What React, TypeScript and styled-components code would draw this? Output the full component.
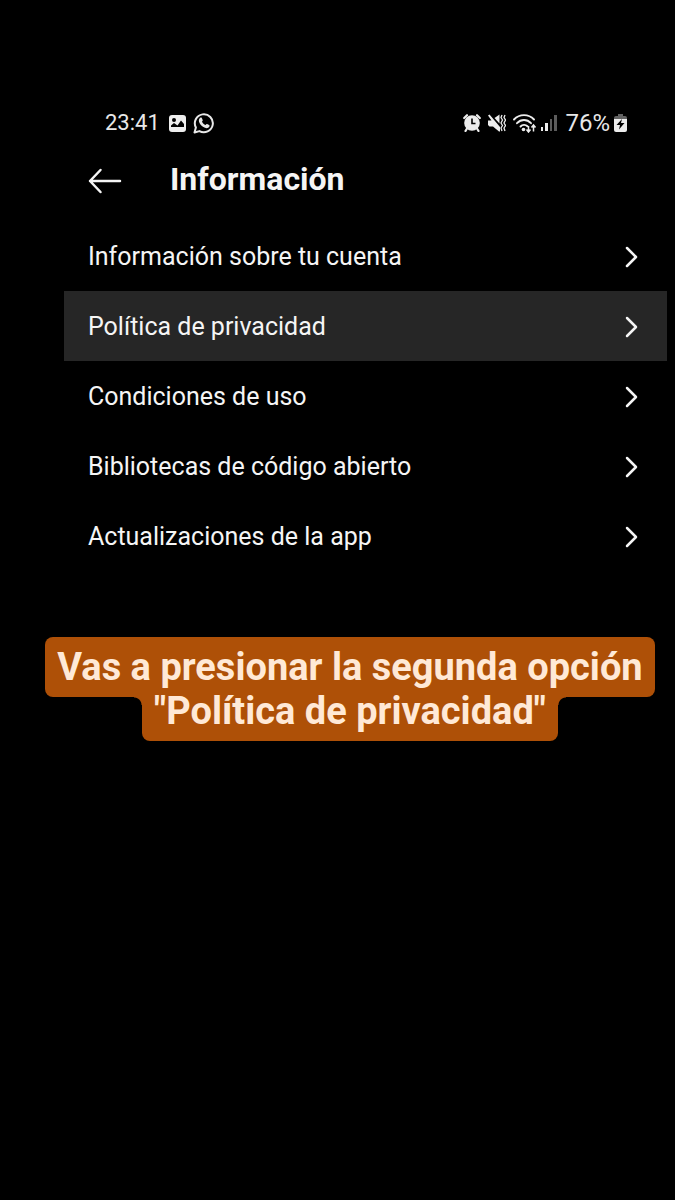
import React from "react";
import styled, { createGlobalStyle } from "styled-components";

const GlobalStyle = createGlobalStyle`
  * { box-sizing: border-box; }
  body { margin: 0; background: #000; }
`;

const Page = styled.div`
  min-height: 100vh;
  padding-top: 106px;
  background: #000;
  color: #f5f5f5;
  font-family: Roboto, sans-serif;
`;

const Screen = styled.main`
  margin: 0 8px 0 64px;
`;

const StatusBar = styled.div`
  display: flex;
  align-items: center;
  justify-content: space-between;
  height: 34px;
  padding: 0 40px 0 41px;
  font-size: 22px;
  line-height: 34px;
  color: #e8e8e8;
`;

const StatusGroup = styled.div<{ $gap: number }>`
  display: flex;
  align-items: center;
  gap: ${(p) => p.$gap}px;
`;

const BatteryLevel = styled.span`
  display: flex;
  align-items: center;
  gap: 4px;
  font-size: 24px;
`;

const Header = styled.header`
  display: flex;
  align-items: center;
  gap: 48px;
  height: 81px;
  padding-left: 24px;
`;

const BackButton = styled.button`
  display: flex;
  padding: 0;
  border: 0;
  background: none;
  color: inherit;
  cursor: pointer;
`;

const Title = styled.h1`
  margin: 0;
  padding-bottom: 4px;
  font-size: 32px;
  line-height: 40px;
  font-weight: 700;
`;

const Options = styled.nav`
  display: flex;
  flex-direction: column;
`;

const Option = styled.a<{ $active?: boolean }>`
  display: flex;
  align-items: center;
  justify-content: space-between;
  height: 70px;
  padding: 2px 29px 0 24px;
  background: ${(p) => (p.$active ? "#262626" : "transparent")};
  color: inherit;
  font-size: 25px;
  line-height: 32px;
  text-decoration: none;
`;

const Caption = styled.p`
  display: flex;
  flex-direction: column;
  align-items: center;
  margin: 66px 21px 0 46px;
  color: #ffe9d6;
  font-size: 38px;
  line-height: 44px;
  font-weight: 700;
  white-space: nowrap;
`;

const CaptionTop = styled.span`
  padding: 8px 12px;
  border-radius: 8px;
  background: #ae5007;
`;

const CaptionBottom = styled.span`
  position: relative;
  margin-top: -8px;
  padding: 0 12px 8px;
  border-radius: 0 0 8px 8px;
  background: #ae5007;

  &::before,
  &::after {
    content: "";
    position: absolute;
    top: 8px;
    width: 8px;
    height: 8px;
  }
  &::before {
    right: 100%;
    background: radial-gradient(circle at 0 100%, transparent 7px, #ae5007 8px);
  }
  &::after {
    left: 100%;
    background: radial-gradient(circle at 100% 100%, transparent 7px, #ae5007 8px);
  }
`;

const PictureIcon = () => (
  <svg width="19" height="19" viewBox="0 0 19 19" aria-hidden="true">
    <rect x="1" y="1" width="17" height="17" rx="3" fill="#ededed" />
    <circle cx="6" cy="6" r="2" fill="#000" />
    <path d="M3 13v-1.500l3-2.500 3.500 2.500 3.500-5 3 3.500v3z" fill="#000" />
  </svg>
);

const WhatsAppIcon = () => (
  <svg width="22" height="22" viewBox="0 0 22 22" aria-hidden="true">
    <path d="M1.5 20.5l1.4-5A9 9 0 1 1 6.400 19.100z" fill="none" stroke="#e8e8e8" strokeWidth="2" strokeLinejoin="round" />
    <path d="M7.200 5.800c.5-.5 1.300-.5 1.600.1l.9 2c.2.5-.1 1-.8 1.700.9 1.800 2 2.800 3.700 3.500.6-.8 1-1.200 1.500-1l2 1c.6.300.5 1 .2 1.600-.8 1.400-2.500 1.800-4.300 1.100-3-1.100-4.800-3-5.900-5.800-.6-1.700.1-3.300 1.100-4.200z" fill="#e8e8e8" />
  </svg>
);

const AlarmIcon = () => (
  <svg width="18" height="18" viewBox="0 0 18 18" aria-hidden="true">
    <circle cx="9" cy="9" r="7.800" fill="#ededed" />
    <path d="M1.200 4L4 1.200M16.800 4L14 1.200M4 14.500L2.500 17M14 14.500l1.500 2.500" stroke="#ededed" strokeWidth="2.200" strokeLinecap="round" />
    <path d="M9 4.500v5h3.500" fill="none" stroke="#000" strokeWidth="1.600" />
  </svg>
);

const MutedVibrateIcon = () => (
  <svg width="18" height="18" viewBox="0 0 18 18" aria-hidden="true">
    <path d="M6.500 4L11.500 0.500v9z" fill="#ededed" />
    <path d="M0 1.500L1.500 0.500L12 13v4.500h-1L5 12.500H1.500L0 11V6.500h3.500z" fill="#ededed" />
    <path d="M14 1l-1 2.500 1.500 2.500L13 9l1.500 2.500L13 14l1 3M17 1l-1 2.500 1.500 2.500L16 9l1.500 2.500L16 14l1 3" fill="none" stroke="#ededed" strokeWidth="1.300" />
  </svg>
);

const WifiIcon = () => (
  <svg width="24" height="20" viewBox="0 0 24 20" aria-hidden="true">
    <g fill="none" stroke="#ededed" strokeWidth="1.900" strokeLinecap="round">
      <path d="M1 6.500C6.500.7 15.500.7 21 6.500" />
      <path d="M4 10.200c4-4.200 10-4.200 14 0" />
      <path d="M7.500 13.500c2-2 5-2 7-.2" />
    </g>
    <circle cx="10.500" cy="16.500" r="1.800" fill="#ededed" />
    <path d="M15.500 13v6M13.500 16.500l2 2.500 2-2.500M20.500 18.500v-6M18.500 14.500l2-2.500 2 2.500" fill="none" stroke="#ededed" strokeWidth="1.500" />
  </svg>
);

const SignalIcon = () => (
  <svg width="17" height="18" viewBox="0 0 17 18" aria-hidden="true">
    <path d="M0 13h2v4H0zM4 9h3v8H4z" fill="#ededed" />
    <path d="M9 5h2v12H9zM13 1h3v16h-3z" fill="#5c5c5c" />
  </svg>
);

const BatteryIcon = () => (
  <svg width="13" height="18" viewBox="0 0 13 18" aria-hidden="true">
    <path d="M4 0h5v2h2a2 2 0 0 1 2 2v2H0V4a2 2 0 0 1 2-2h2z" fill="#626262" />
    <path d="M0 5h13v11a2 2 0 0 1-2 2H2a2 2 0 0 1-2-2z" fill="#ededed" />
    <path d="M8 5l-5.500 6H6l-1 4.500L10.500 9H7z" fill="#000" />
  </svg>
);

const BackIcon = () => (
  <svg width="34" height="26" viewBox="0 0 34 26" fill="none" stroke="#f5f5f5" strokeWidth="2.500" strokeLinecap="round" strokeLinejoin="round" aria-hidden="true">
    <path d="M12.500 2L2 13l10.500 11M2 13h30" />
  </svg>
);

const ChevronIcon = () => (
  <svg width="14" height="22" viewBox="0 0 14 22" fill="none" stroke="#f5f5f5" strokeWidth="2.500" strokeLinecap="round" strokeLinejoin="round" aria-hidden="true">
    <path d="M3 2l9 9-9 9" />
  </svg>
);

const options = [
  "Información sobre tu cuenta",
  "Política de privacidad",
  "Condiciones de uso",
  "Bibliotecas de código abierto",
  "Actualizaciones de la app",
];

export default function App() {
  return (
    <Page lang="es">
      <GlobalStyle />
      <Screen>
        <StatusBar>
          <StatusGroup $gap={8}>
            <time>23:41</time>
            <StatusGroup $gap={6}>
              <PictureIcon />
              <WhatsAppIcon />
            </StatusGroup>
          </StatusGroup>
          <StatusGroup $gap={7}>
            <AlarmIcon />
            <MutedVibrateIcon />
            <StatusGroup $gap={4}>
              <WifiIcon />
              <SignalIcon />
            </StatusGroup>
            <BatteryLevel>
              76%
              <BatteryIcon />
            </BatteryLevel>
          </StatusGroup>
        </StatusBar>
        <Header>
          <BackButton type="button" aria-label="Volver">
            <BackIcon />
          </BackButton>
          <Title>Información</Title>
        </Header>
        <Options>
          {options.map((label, i) => (
            <Option key={label} href="#" $active={i === 1}>
              {label}
              <ChevronIcon />
            </Option>
          ))}
        </Options>
      </Screen>
      <Caption>
        <CaptionTop>Vas a presionar la segunda opción</CaptionTop>
        <CaptionBottom>"Política de privacidad"</CaptionBottom>
      </Caption>
    </Page>
  );
}
